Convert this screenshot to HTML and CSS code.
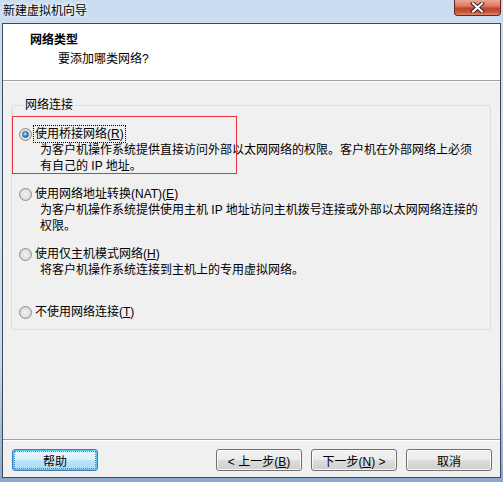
FILE: index.html
```html
<!DOCTYPE html>
<html lang="zh-CN">
  <head>
    <meta charset="UTF-8">
    <title>新建虚拟机向导</title>
    <link rel="stylesheet" href="styles.css">
  </head>
  <body>
<div class="titlebar">
    <span class="caption">新建虚拟机向导</span>
    <div class="closebtn">
        <svg width="17" height="11" viewBox="0 0 17 11">
            <path d="M4 1.5 L13 9.5 M13 1.5 L4 9.5" stroke="#3b2a26" stroke-width="4" stroke-linecap="square"/>
            <path d="M4 1.5 L13 9.5 M13 1.5 L4 9.5" stroke="#ffffff" stroke-width="2" stroke-linecap="square"/>
        </svg>
    </div>
</div>
<div class="client">
    <div class="header">
        <div class="htitle">网络类型</div>
        <div class="hsub">要添加哪类网络?</div>
    </div>
    <div class="content">
        <fieldset class="group">
            <legend>网络连接</legend>
            <div class="option">
                <div class="optlabel"><span class="radio checked"></span><span class="focus">使用桥接网络(<u>R</u>)</span></div>
                <div class="desc">为客户机操作系统提供直接访问外部以太网网络的权限。客户机在外部网络上必须<br>有自己的 IP 地址。</div>
            </div>
            <div class="option">
                <div class="optlabel"><span class="radio"></span><span>使用网络地址转换(NAT)(<u>E</u>)</span></div>
                <div class="desc">为客户机操作系统提供使用主机 IP 地址访问主机拨号连接或外部以太网网络连接的<br>权限。</div>
            </div>
            <div class="option">
                <div class="optlabel"><span class="radio"></span><span>使用仅主机模式网络(<u>H</u>)</span></div>
                <div class="desc">将客户机操作系统连接到主机上的专用虚拟网络。</div>
            </div>
            <div class="option last">
                <div class="optlabel"><span class="radio"></span><span>不使用网络连接(<u>T</u>)</span></div>
            </div>
            <div class="mark"></div>
        </fieldset>
    </div>
    <div class="footer">
        <button class="btn default">帮助</button>
        <div class="navbtns">
            <button class="btn">&lt; 上一步(<u>B</u>)</button>
            <button class="btn">下一步(<u>N</u>) &gt;</button>
            <button class="btn">取消</button>
        </div>
    </div>
</div>
  </body>
</html>
```

FILE: styles.css
```css
html, body {
    margin: 0;
    height: 100%;
}
body {
    width: 503px;
    height: 482px;
    box-sizing: border-box;
    padding: 0 2px 4px 2px;
    display: flex;
    flex-direction: column;
    font-family: "Liberation Sans", "Noto Sans CJK SC", sans-serif;
    font-size: 12px;
    color: #000;
    background: linear-gradient(180deg, #c9dcf0 0%, #d3e3f4 40%, #c6d9ee 75%, #8aa8c8 100%);
    overflow: hidden;
}
.titlebar {
    height: 23px;
    display: flex;
    justify-content: space-between;
    align-items: flex-start;
    flex-shrink: 0;
}
.caption {
    padding: 3px 0 0 1px;
    line-height: 16px;
    color: #000;
    text-shadow: 0 0 6px #fff, 0 0 3px #fff;
}
.closebtn {
    width: 45px;
    height: 15px;
    margin-right: 0;
    border: 1px solid #6a241a;
    border-top: none;
    border-radius: 0 0 4px 4px;
    background: linear-gradient(180deg, #eaa796 0%, #dc7a63 40%, #c4422a 55%, #c95238 80%, #dc8a6c 100%);
    display: flex;
    align-items: center;
    justify-content: center;
}
.closebtn svg {
    display: block;
}
.client {
    flex: 1;
    display: flex;
    flex-direction: column;
    border: 1px solid #3e4a58;
    background-color: #f0f0f0;
}
.header {
    height: 57px;
    box-sizing: border-box;
    padding: 8px 0 0 27px;
    background-color: #fff;
    border-bottom: 1px solid #a0a0a0;
}
.htitle {
    font-weight: 700;
    line-height: 16px;
}
.hsub {
    margin-top: 3px;
    padding-left: 28px;
    line-height: 16px;
}
.content {
    flex: 1;
    border-top: 1px solid #fff;
    padding: 15px 9px 0 8px;
}
.group {
    position: relative;
    margin: 0;
    padding: 13px 0 9px 7px;
    border: 1px solid #d5dfe5;
    border-radius: 3px;
}
.group legend {
    margin-left: 4px;
    padding: 0 2px;
    line-height: 16px;
}
.option {
    line-height: 16px;
    margin-bottom: 12px;
    white-space: nowrap;
}
.option.last {
    margin-top: 26px;
    margin-bottom: 0;
}
.optlabel {
    display: flex;
    align-items: center;
}
.radio {
    width: 11px;
    height: 11px;
    margin-right: 3px;
    border-radius: 50%;
    border: 1px solid #8a8c8e;
    background: radial-gradient(circle at 50% 50%, #f4f4f4 0%, #e0e0e0 55%, #c8c8c8 100%);
    display: flex;
    align-items: center;
    justify-content: center;
    flex-shrink: 0;
}
.radio.checked::after {
    content: "";
    width: 5px;
    height: 5px;
    border-radius: 50%;
    background: radial-gradient(circle at 40% 35%, #c8ecff 0%, #3c9be0 45%, #1a5693 100%);
    border: 1px solid #2d5f8f;
}
.focus {
    outline: 1px dotted #000;
    outline-offset: 0;
    padding: 0 1px;
    margin-left: -1px;
}
u {
    text-decoration: underline;
    text-underline-offset: 1px;
}
.desc {
    padding-left: 21px;
}
.mark {
    position: absolute;
    left: 0;
    top: 3px;
    width: 223px;
    height: 56px;
    border: 1px solid #e8323c;
}
.footer {
    display: flex;
    justify-content: space-between;
    border-top: 1px solid #a0a0a0;
    box-shadow: inset 0 1px 0 #fff;
    padding: 9px 8px 6px 9px;
}
.navbtns {
    display: flex;
    gap: 9px;
}
.btn {
    width: 86px;
    height: 22px;
    padding: 0;
    font-family: "Liberation Sans", "Noto Sans CJK SC", sans-serif;
    font-size: 12px;
    color: #000;
    border: 1px solid #707070;
    border-radius: 3px;
    background: linear-gradient(180deg, #f2f2f2 0%, #ebebeb 49%, #dddddd 50%, #cfcfcf 100%);
    box-shadow: inset 0 0 0 1px rgba(255, 255, 255, 0.8);
}
.btn.default {
    border-color: #3c7fb1;
    background: linear-gradient(180deg, #eaf6fd 0%, #d9f0fc 49%, #bee6fd 50%, #a7d9f5 100%);
    box-shadow: inset 0 0 0 1px #5ec4f0;
    outline: 1px dotted #3a8ed0;
    outline-offset: -3px;
}
```
